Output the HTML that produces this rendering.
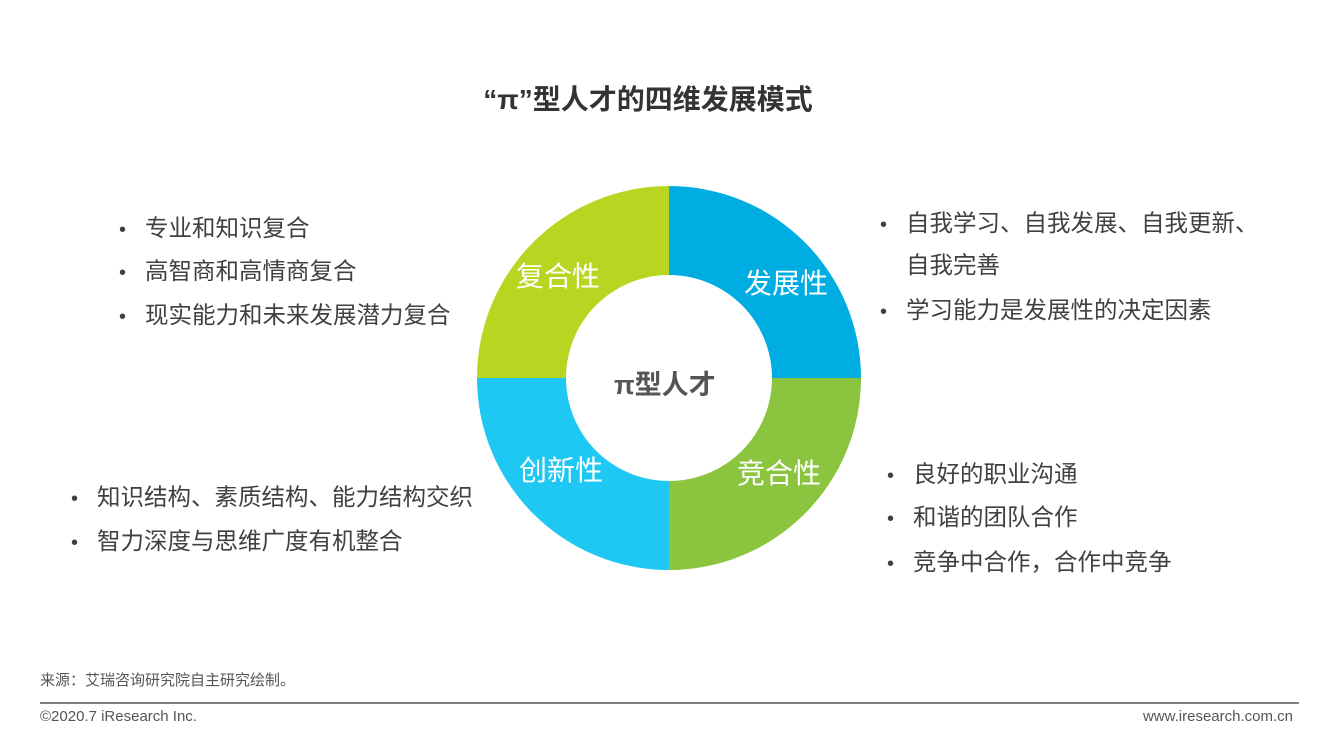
<!DOCTYPE html>
<html><head><meta charset="utf-8"><style>
body{margin:0;width:1329px;height:739px;background:#fff;position:relative;overflow:hidden;font-family:"Liberation Sans","Noto Sans CJK SC",sans-serif;}
.t{position:absolute;white-space:nowrap;}
.b{position:absolute;white-space:nowrap;font-size:23.5px;color:#404040;line-height:1;}
.b span{display:inline-block;width:26px;font-size:20px;}
.w{position:absolute;color:#fff;font-size:28px;line-height:1;white-space:nowrap;}
</style></head><body>
<div class="t" style="left:0;width:1296px;top:78px;text-align:center;font-size:28px;font-weight:bold;color:#333;">“π”型人才的四维发展模式</div>
<svg style="position:absolute;left:0;top:0" width="1329" height="739">
<g transform="translate(669,378)">
<path d="M0,-192 A192,192 0 0 0 -192,0 L0,0Z" fill="#bad521"/>
<path d="M0,-192 A192,192 0 0 1 192,0 L0,0Z" fill="#00ade3"/>
<path d="M-192,0 A192,192 0 0 0 0,192 L0,0Z" fill="#1ec8f2"/>
<path d="M192,0 A192,192 0 0 1 0,192 L0,0Z" fill="#8bc43f"/>
<circle r="103" fill="#fff"/>
</g></svg>
<div class="w" style="left:516px;top:263px;">复合性</div>
<div class="w" style="left:744px;top:270px;">发展性</div>
<div class="w" style="left:519px;top:457px;">创新性</div>
<div class="w" style="left:737px;top:460px;">竞合性</div>
<div class="t" style="left:614px;top:363px;font-size:27px;font-weight:bold;color:#555;">π型人才</div>
<div class="b" style="left:119px;top:217px;"><span>•</span>专业和知识复合</div>
<div class="b" style="left:119px;top:260px;"><span>•</span>高智商和高情商复合</div>
<div class="b" style="left:119px;top:304px;"><span>•</span>现实能力和未来发展潜力复合</div>
<div class="b" style="left:880px;top:212px;"><span>•</span>自我学习、自我发展、自我更新、</div>
<div class="b" style="left:880px;top:254px;"><span></span>自我完善</div>
<div class="b" style="left:880px;top:299px;"><span>•</span>学习能力是发展性的决定因素</div>
<div class="b" style="left:71px;top:486px;"><span>•</span>知识结构、素质结构、能力结构交织</div>
<div class="b" style="left:71px;top:530px;"><span>•</span>智力深度与思维广度有机整合</div>
<div class="b" style="left:887px;top:463px;"><span>•</span>良好的职业沟通</div>
<div class="b" style="left:887px;top:506px;"><span>•</span>和谐的团队合作</div>
<div class="b" style="left:887px;top:551px;"><span>•</span>竞争中合作，合作中竞争</div>
<div class="t" style="left:40px;top:669px;font-size:15px;color:#555;">来源：艾瑞咨询研究院自主研究绘制。</div>
<div style="position:absolute;left:40px;top:702px;width:1259px;height:2px;background:#808080;"></div>
<div class="t" style="left:40px;top:708px;font-size:15px;color:#555;">©2020.7 iResearch Inc.</div>
<div class="t" style="right:36px;top:708px;font-size:15px;color:#555;">www.iresearch.com.cn</div>
</body></html>
